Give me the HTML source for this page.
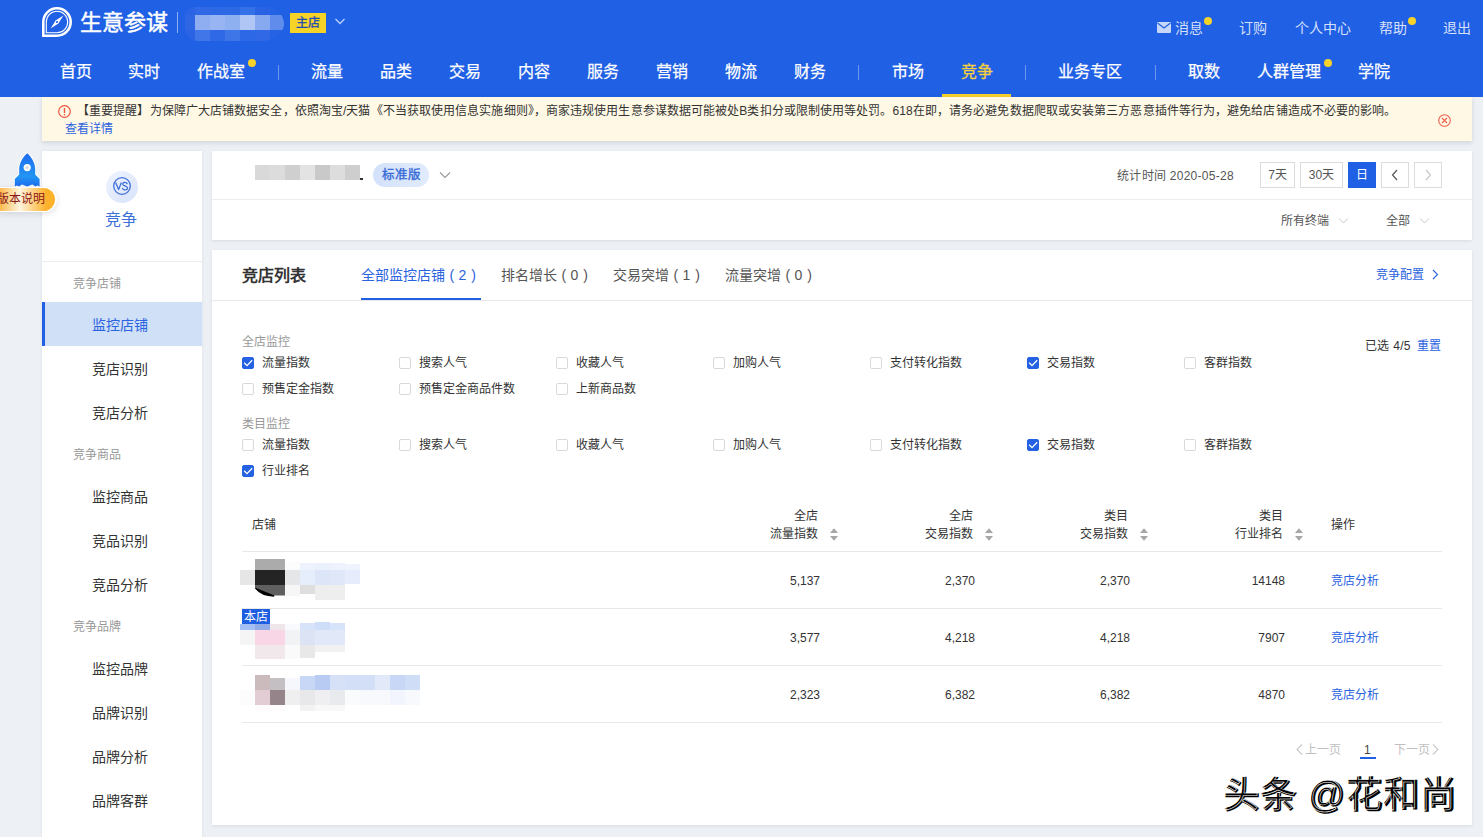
<!DOCTYPE html>
<html lang="zh-CN">
<head>
<meta charset="utf-8">
<style>
*{box-sizing:border-box;margin:0;padding:0}
html,body{width:1483px;height:837px;overflow:hidden;background:#edf0f5;font-family:"Liberation Sans",sans-serif;color:#333}
.a{position:absolute;white-space:nowrap}
#hd{position:absolute;left:0;top:0;width:1483px;height:97px;background:#1f60e4}
.nv{position:absolute;top:62px;font-size:16px;line-height:20px;color:#fff;-webkit-text-stroke:.25px currentColor}
.sep{position:absolute;top:65px;width:1px;height:15px;background:rgba(255,255,255,.35)}
.dot{position:absolute;width:8px;height:8px;border-radius:50%;background:#f7d22b}
.tr{position:absolute;top:19px;font-size:14px;line-height:18px;color:rgba(255,255,255,.82)}
.gh{position:absolute;left:31px;font-size:12px;line-height:16px;color:#999;white-space:nowrap}
.mi{position:absolute;left:50px;font-size:14px;line-height:18px;color:#333;white-space:nowrap}
.btn{position:absolute;top:11px;height:26px;border:1px solid #dcdcdc;font-size:12px;line-height:24px;text-align:center;color:#555;background:#fff}
.btn svg{display:inline-block;vertical-align:top}
i{display:block}
.gl{position:absolute;font-size:12px;line-height:16px;color:#999;white-space:nowrap}
.cl{position:absolute;font-size:12px;line-height:16px;color:#333;white-space:nowrap}
.cb{position:absolute;width:12px;height:12px;border:1px solid #d9d9d9;border-radius:2px;background:#fff}
.cb.on{background:#2562e3;border-color:#2562e3}
.th{position:absolute;font-size:12px;line-height:18px;color:#333;white-space:nowrap}
.td{position:absolute;font-size:12px;line-height:16px;color:#333;white-space:nowrap}
</style>
</head>
<body>
<div id="hd">
  <svg class="a" style="left:42px;top:7px" width="30" height="30" viewBox="0 0 30 30">
    <path d="M1.3 28.7 V15 A13.7 13.7 0 1 1 15 28.7 Z" fill="none" stroke="#fff" stroke-width="2.6" stroke-linejoin="miter"/>
    <path d="M4.3 25.7 V15 A10.7 10.7 0 1 1 15 25.7 Z" fill="none" stroke="#fff" stroke-width="1.1"/>
    <path d="M8.6 21.4 L13.6 13.6 L21.4 8.6 L16.4 16.4 Z" fill="#fff"/>
    <circle cx="15" cy="15" r="1.1" fill="#1f60e4"/>
  </svg>
  <div class="a" style="left:80px;top:9px;font-size:22px;line-height:28px;color:#fff;-webkit-text-stroke:.45px #fff">生意参谋</div>
  <div class="a" style="left:177px;top:12px;width:1px;height:21px;background:rgba(255,255,255,.5)"></div>
  <div class="a" style="left:185px;top:7px;width:99px;height:34px;overflow:hidden;border-radius:10px 18px 22px 14px / 8px 17px 17px 12px">
    <div class="a" style="left:0;top:0;width:99px;height:34px;background:#2a64e5"></div>
    <i class="a" style="left:10px;top:0px;width:15px;height:8px;background:#3068e6"></i><i class="a" style="left:10px;top:8px;width:15px;height:15px;background:#8eaef1"></i><i class="a" style="left:10px;top:23px;width:15px;height:11px;background:#4176e8"></i><i class="a" style="left:25px;top:0px;width:15px;height:8px;background:#2d69e6"></i><i class="a" style="left:25px;top:8px;width:15px;height:15px;background:#98b4f2"></i><i class="a" style="left:25px;top:23px;width:15px;height:11px;background:#2f69e6"></i><i class="a" style="left:40px;top:0px;width:15px;height:8px;background:#2e69e5"></i><i class="a" style="left:40px;top:8px;width:15px;height:15px;background:#8fb0f0"></i><i class="a" style="left:40px;top:23px;width:15px;height:11px;background:#3e76e8"></i><i class="a" style="left:55px;top:0px;width:15px;height:8px;background:#3470e8"></i><i class="a" style="left:55px;top:8px;width:15px;height:15px;background:#b0c7f5"></i><i class="a" style="left:55px;top:23px;width:15px;height:11px;background:#2d68e6"></i><i class="a" style="left:70px;top:0px;width:15px;height:8px;background:#2963e4"></i><i class="a" style="left:70px;top:8px;width:15px;height:15px;background:#86a9ef"></i><i class="a" style="left:70px;top:23px;width:15px;height:11px;background:#3068e6"></i><i class="a" style="left:85px;top:0px;width:15px;height:8px;background:#2563e5"></i><i class="a" style="left:85px;top:8px;width:15px;height:15px;background:#608ceb"></i><i class="a" style="left:85px;top:23px;width:15px;height:11px;background:#2663e4"></i><i class="a" style="left:0px;top:8px;width:10px;height:15px;background:#2f66e4"></i>
  </div>
  <div class="a" style="left:290px;top:13px;width:36px;height:20px;background:#f5d327;color:#1a4ab8;font-size:12px;line-height:20px;text-align:center;-webkit-text-stroke:.3px #1a4ab8">主店</div>
  <svg class="a" style="left:334px;top:17px" width="12" height="9" viewBox="0 0 12 9"><path d="M1.5 2 L6 6.5 L10.5 2" fill="none" stroke="rgba(255,255,255,.7)" stroke-width="1.3"/></svg>

  <svg class="a" style="left:1157px;top:22px" width="14" height="11" viewBox="0 0 14 11"><rect x="0" y="0" width="14" height="11" rx="1" fill="rgba(255,255,255,.75)"/><path d="M0.5 1 L7 6 L13.5 1" fill="none" stroke="#1f60e4" stroke-width="1.2"/></svg>
  <div class="tr" style="left:1175px">消息</div><div class="dot" style="left:1204px;top:17px"></div>
  <div class="tr" style="left:1239px">订购</div>
  <div class="tr" style="left:1295px">个人中心</div>
  <div class="tr" style="left:1379px">帮助</div><div class="dot" style="left:1408px;top:17px"></div>
  <div class="tr" style="left:1443px">退出</div>

  <div class="nv" style="left:60px">首页</div>
  <div class="nv" style="left:128px">实时</div>
  <div class="nv" style="left:197px">作战室</div><div class="dot" style="left:248px;top:59px"></div>
  <div class="sep" style="left:278px"></div>
  <div class="nv" style="left:311px">流量</div>
  <div class="nv" style="left:380px">品类</div>
  <div class="nv" style="left:449px">交易</div>
  <div class="nv" style="left:518px">内容</div>
  <div class="nv" style="left:587px">服务</div>
  <div class="nv" style="left:656px">营销</div>
  <div class="nv" style="left:725px">物流</div>
  <div class="nv" style="left:794px">财务</div>
  <div class="sep" style="left:858px"></div>
  <div class="nv" style="left:892px">市场</div>
  <div class="nv" style="left:961px;color:#f7d13c">竞争</div>
  <div class="a" style="left:942px;top:94px;width:69px;height:3px;background:#f5cf2a"></div>
  <div class="sep" style="left:1025px"></div>
  <div class="nv" style="left:1058px">业务专区</div>
  <div class="sep" style="left:1155px"></div>
  <div class="nv" style="left:1188px">取数</div>
  <div class="nv" style="left:1257px">人群管理</div><div class="dot" style="left:1324px;top:59px"></div>
  <div class="nv" style="left:1358px">学院</div>
</div>
<div class="a" style="left:42px;top:97px;width:1430px;height:44px;background:#fef8e5;box-shadow:0 2px 5px rgba(0,0,0,.12)">
  <svg class="a" style="left:16px;top:8px" width="13" height="13" viewBox="0 0 13 13"><circle cx="6.5" cy="6.5" r="5.8" fill="none" stroke="#f0533f" stroke-width="1.2"/><rect x="5.8" y="3" width="1.4" height="5" fill="#f0533f"/><rect x="5.8" y="9" width="1.4" height="1.4" fill="#f0533f"/></svg>
  <div class="a" style="left:35px;top:6px;font-size:12px;line-height:16px;color:#333;letter-spacing:.09px">【重要提醒】为保障广大店铺数据安全，依照淘宝/天猫《不当获取使用信息实施细则》，商家违规使用生意参谋数据可能被处B类扣分或限制使用等处罚。618在即，请务必避免数据爬取或安装第三方恶意插件等行为，避免给店铺造成不必要的影响。</div>
  <div class="a" style="left:23px;top:24px;font-size:12px;line-height:16px;color:#2a62e0">查看详情</div>
  <svg class="a" style="left:1396px;top:17px" width="13" height="13" viewBox="0 0 13 13"><circle cx="6.5" cy="6.5" r="5.8" fill="none" stroke="#f2604c" stroke-width="1.1"/><path d="M4 4 L9 9 M9 4 L4 9" stroke="#f2604c" stroke-width="1.1"/></svg>
</div>

<div class="a" style="left:42px;top:151px;width:160px;height:700px;background:#fff;box-shadow:0 0 3px rgba(0,0,0,.08)">
  <div class="a" style="left:64px;top:20px;width:32px;height:32px;border-radius:50%;background:linear-gradient(135deg,#eef3fe 0%,#d8e3fa 100%)"></div>
  <svg class="a" style="left:70px;top:25px" width="20" height="20" viewBox="0 0 20 20"><circle cx="10" cy="10" r="8.3" fill="none" stroke="#3e6fd9" stroke-width="1.3"/><path d="M3.6 6.6 L6.6 13.6 L9.4 6.6" fill="none" stroke="#3e6fd9" stroke-width="1.3" stroke-linejoin="round"/><path d="M15.2 7.6 C14.6 6.6 13.6 6.3 12.6 6.4 C11.2 6.6 10.5 7.6 11 8.8 C11.6 10.1 15.4 9.8 15.5 12 C15.6 13.4 14.2 14 12.8 13.9 C11.7 13.8 10.9 13.2 10.5 12.5" fill="none" stroke="#3e6fd9" stroke-width="1.3" stroke-linecap="round"/></svg>
  <div class="a" style="left:63px;top:59px;font-size:16px;line-height:20px;color:#3c6fd8">竞争</div>
  <div class="a" style="left:0;top:110px;width:160px;height:1px;background:#eceef2"></div>
  <div class="gh" style="top:125px">竞争店铺</div>
  <div class="a" style="left:0;top:151px;width:160px;height:44px;background:#cfe0f7;border-left:3px solid #1f60e4"></div>
  <div class="mi" style="top:165px;color:#2a62e0">监控店铺</div>
  <div class="mi" style="top:209px">竞店识别</div>
  <div class="mi" style="top:253px">竞店分析</div>
  <div class="gh" style="top:296px">竞争商品</div>
  <div class="mi" style="top:337px">监控商品</div>
  <div class="mi" style="top:381px">竞品识别</div>
  <div class="mi" style="top:425px">竞品分析</div>
  <div class="gh" style="top:468px">竞争品牌</div>
  <div class="mi" style="top:509px">监控品牌</div>
  <div class="mi" style="top:553px">品牌识别</div>
  <div class="mi" style="top:597px">品牌分析</div>
  <div class="mi" style="top:641px">品牌客群</div>
</div>
<svg class="a" style="left:10px;top:150px" width="36" height="40" viewBox="0 0 36 40">
  <defs><linearGradient id="rg" x1="0" y1="0" x2="0" y2="1"><stop offset="0" stop-color="#1f6cef"/><stop offset="0.7" stop-color="#2294f4"/><stop offset="1" stop-color="#1c6cee"/></linearGradient></defs>
  <path d="M17.2 3.2 C12 8 9 14 9.2 20 L9.2 24.5 L4.8 29 L4.8 36.5 L7 35.5 L9 36.5 L12 34.5 L17.2 36.6 L22.4 34.5 L25.4 36.5 L27.4 35.5 L29.6 36.5 L29.6 29 L25.2 24.5 L25.2 20 C25.4 14 22.4 8 17.2 3.2 Z" fill="url(#rg)" stroke="#fff" stroke-width="2" stroke-linejoin="round" paint-order="stroke"/>
  <circle cx="17.2" cy="17.6" r="3.6" fill="#fff"/><circle cx="17.2" cy="17.6" r="1.8" fill="#ddd"/>
</svg>
<div class="a" style="left:-4px;top:187px;width:61px;height:25px;border-radius:0 12.5px 12.5px 0;background:#fff;box-shadow:0 2px 6px rgba(0,0,0,.12)"></div>
<div class="a" style="left:-2px;top:188px;width:57px;height:23px;border-radius:0 11.5px 11.5px 0;background:linear-gradient(90deg,#fcb43e 0%,#fdd38b 18%,#fff5de 38%,#fdd080 62%,#fdb22c 85%,#fdb22c 100%)"></div>
<div class="a" style="left:-3px;top:190px;font-size:12px;line-height:18px;color:#8c1616">版本说明</div>


<div class="a" style="left:212px;top:151px;width:1260px;height:89px;background:#fff;box-shadow:0 1px 3px rgba(0,0,0,.09)">
  <div class="a" style="left:43px;top:14px;width:105px;height:15px;display:flex">
    <i style="width:15px;background:#d9d9d9"></i><i style="width:15px;background:#dcdcdc"></i><i style="width:15px;background:#cfcfcf"></i><i style="width:15px;background:#e3e3e3"></i><i style="width:15px;background:#c9c9c9"></i><i style="width:15px;background:#dddddd"></i><i style="width:15px;background:#cecece"></i>
  </div>
  <i class="a" style="left:148px;top:27px;width:3px;height:2px;background:#333"></i>
  <div class="a" style="left:161px;top:12px;width:56px;height:24px;border-radius:12px;background:linear-gradient(90deg,#d3e2fb,#e1ebfc);color:#3a6cd6;font-size:12.5px;line-height:24px;text-align:center;-webkit-text-stroke:.4px #3a6cd6">标准版</div>
  <svg class="a" style="left:227px;top:20px" width="12" height="8" viewBox="0 0 12 8"><path d="M1 1.5 L6 6.5 L11 1.5" fill="none" stroke="#999" stroke-width="1.1"/></svg>
  <div class="a" style="left:905px;top:17px;font-size:12px;line-height:16px;color:#555;letter-spacing:.28px">统计时间 2020-05-28</div>
  <div class="btn" style="left:1048px;width:35px">7天</div>
  <div class="btn" style="left:1088px;width:43px">30天</div>
  <div class="btn" style="left:1136px;width:28px;background:#1f60e4;border-color:#1f60e4;color:#fff">日</div>
  <div class="btn" style="left:1169px;width:28px"><svg width="8" height="12" viewBox="0 0 8 12" style="margin-top:6px"><path d="M6 1 L1.5 6 L6 11" fill="none" stroke="#555" stroke-width="1.2"/></svg></div>
  <div class="btn" style="left:1202px;width:28px"><svg width="8" height="12" viewBox="0 0 8 12" style="margin-top:6px"><path d="M2 1 L6.5 6 L2 11" fill="none" stroke="#c8c8c8" stroke-width="1.2"/></svg></div>
  <div class="a" style="left:0;top:48px;width:1260px;height:1px;background:#ededed"></div>
  <div class="a" style="left:1069px;top:62px;font-size:12px;line-height:16px;color:#555">所有终端</div>
  <svg class="a" style="left:1126px;top:66px" width="11" height="8" viewBox="0 0 11 8"><path d="M1 1.5 L5.5 6 L10 1.5" fill="none" stroke="#c8c8c8" stroke-width="1"/></svg>
  <div class="a" style="left:1174px;top:62px;font-size:12px;line-height:16px;color:#555">全部</div>
  <svg class="a" style="left:1207px;top:66px" width="11" height="8" viewBox="0 0 11 8"><path d="M1 1.5 L5.5 6 L10 1.5" fill="none" stroke="#c8c8c8" stroke-width="1"/></svg>
</div>
<div class="a" style="left:212px;top:250px;width:1260px;height:575px;background:#fff;box-shadow:0 1px 3px rgba(0,0,0,.09)">
  <div class="a" style="left:30px;top:16px;font-size:16px;line-height:20px;color:#333;font-weight:700">竞店列表</div>
  <div class="a" style="left:149px;top:16px;font-size:14px;line-height:18px;color:#2a62e0">全部监控店铺<span style="position:absolute;left:88.6px;top:0">(</span><span style="position:absolute;left:97.6px;top:0">2</span><span style="position:absolute;left:110.2px;top:0">)</span></div>
  <div class="a" style="left:149px;top:48px;width:120px;height:2px;background:#1f60e4"></div>
  <div class="a" style="left:289px;top:16px;font-size:14px;line-height:18px;color:#555">排名增长<span style="position:absolute;left:60.6px;top:0">(</span><span style="position:absolute;left:69.6px;top:0">0</span><span style="position:absolute;left:82.2px;top:0">)</span></div>
  <div class="a" style="left:401px;top:16px;font-size:14px;line-height:18px;color:#555">交易突增<span style="position:absolute;left:60.6px;top:0">(</span><span style="position:absolute;left:69.6px;top:0">1</span><span style="position:absolute;left:82.2px;top:0">)</span></div>
  <div class="a" style="left:513px;top:16px;font-size:14px;line-height:18px;color:#555">流量突增<span style="position:absolute;left:60.6px;top:0">(</span><span style="position:absolute;left:69.6px;top:0">0</span><span style="position:absolute;left:82.2px;top:0">)</span></div>
  <div class="a" style="left:1164px;top:17px;font-size:12px;line-height:16px;color:#2a62e0">竞争配置</div>
  <svg class="a" style="left:1220px;top:19px" width="7" height="11" viewBox="0 0 7 11"><path d="M1 1 L5.5 5.5 L1 10" fill="none" stroke="#2a62e0" stroke-width="1.1"/></svg>
  <div class="a" style="left:0;top:50px;width:1260px;height:1px;background:#e8e8e8"></div>
  <div class="gl" style="left:30px;top:84px">全店监控</div>
  <div class="cb on" style="left:30px;top:107px"><svg style="position:absolute;left:-1px;top:-1px" width="12" height="12" viewBox="0 0 12 12"><path d="M2.2 5.8 L5 8.6 L10.2 3.2" fill="none" stroke="#fff" stroke-width="1.3"/></svg></div><div class="cl" style="left:50px;top:105px">流量指数</div>
  <div class="cb" style="left:187px;top:107px"></div><div class="cl" style="left:207px;top:105px">搜索人气</div>
  <div class="cb" style="left:344px;top:107px"></div><div class="cl" style="left:364px;top:105px">收藏人气</div>
  <div class="cb" style="left:501px;top:107px"></div><div class="cl" style="left:521px;top:105px">加购人气</div>
  <div class="cb" style="left:658px;top:107px"></div><div class="cl" style="left:678px;top:105px">支付转化指数</div>
  <div class="cb on" style="left:815px;top:107px"><svg style="position:absolute;left:-1px;top:-1px" width="12" height="12" viewBox="0 0 12 12"><path d="M2.2 5.8 L5 8.6 L10.2 3.2" fill="none" stroke="#fff" stroke-width="1.3"/></svg></div><div class="cl" style="left:835px;top:105px">交易指数</div>
  <div class="cb" style="left:972px;top:107px"></div><div class="cl" style="left:992px;top:105px">客群指数</div>
  <div class="cb" style="left:30px;top:133px"></div><div class="cl" style="left:50px;top:131px">预售定金指数</div>
  <div class="cb" style="left:187px;top:133px"></div><div class="cl" style="left:207px;top:131px">预售定金商品件数</div>
  <div class="cb" style="left:344px;top:133px"></div><div class="cl" style="left:364px;top:131px">上新商品数</div>
  <div class="gl" style="left:30px;top:166px">类目监控</div>
  <div class="cb" style="left:30px;top:189px"></div><div class="cl" style="left:50px;top:187px">流量指数</div>
  <div class="cb" style="left:187px;top:189px"></div><div class="cl" style="left:207px;top:187px">搜索人气</div>
  <div class="cb" style="left:344px;top:189px"></div><div class="cl" style="left:364px;top:187px">收藏人气</div>
  <div class="cb" style="left:501px;top:189px"></div><div class="cl" style="left:521px;top:187px">加购人气</div>
  <div class="cb" style="left:658px;top:189px"></div><div class="cl" style="left:678px;top:187px">支付转化指数</div>
  <div class="cb on" style="left:815px;top:189px"><svg style="position:absolute;left:-1px;top:-1px" width="12" height="12" viewBox="0 0 12 12"><path d="M2.2 5.8 L5 8.6 L10.2 3.2" fill="none" stroke="#fff" stroke-width="1.3"/></svg></div><div class="cl" style="left:835px;top:187px">交易指数</div>
  <div class="cb" style="left:972px;top:189px"></div><div class="cl" style="left:992px;top:187px">客群指数</div>
  <div class="cb on" style="left:30px;top:215px"><svg style="position:absolute;left:-1px;top:-1px" width="12" height="12" viewBox="0 0 12 12"><path d="M2.2 5.8 L5 8.6 L10.2 3.2" fill="none" stroke="#fff" stroke-width="1.3"/></svg></div><div class="cl" style="left:50px;top:213px">行业排名</div>
  <div class="a" style="left:1153px;top:88px;font-size:12px;line-height:16px;color:#333;letter-spacing:.3px">已选 4/5</div>
  <div class="a" style="left:1205px;top:88px;font-size:12px;line-height:16px;color:#2a62e0">重置</div>
  <div class="th" style="left:40px;top:266px">店铺</div>
  <div class="th" style="right:654px;top:257px;text-align:right">全店<br>流量指数</div>
  <svg class="a" style="left:618px;top:278px" width="8" height="13" viewBox="0 0 8 13"><path d="M4 0.3 L8 5 H0 Z M4 12.7 L8 8 H0 Z" fill="#a6a6a6"/></svg>
  <div class="th" style="right:499px;top:257px;text-align:right">全店<br>交易指数</div>
  <svg class="a" style="left:773px;top:278px" width="8" height="13" viewBox="0 0 8 13"><path d="M4 0.3 L8 5 H0 Z M4 12.7 L8 8 H0 Z" fill="#a6a6a6"/></svg>
  <div class="th" style="right:344px;top:257px;text-align:right">类目<br>交易指数</div>
  <svg class="a" style="left:928px;top:278px" width="8" height="13" viewBox="0 0 8 13"><path d="M4 0.3 L8 5 H0 Z M4 12.7 L8 8 H0 Z" fill="#a6a6a6"/></svg>
  <div class="th" style="right:189px;top:257px;text-align:right">类目<br>行业排名</div>
  <svg class="a" style="left:1083px;top:278px" width="8" height="13" viewBox="0 0 8 13"><path d="M4 0.3 L8 5 H0 Z M4 12.7 L8 8 H0 Z" fill="#a6a6a6"/></svg>
  <div class="th" style="left:1119px;top:266px">操作</div>
  <div class="a" style="left:30px;top:301px;width:1200px;height:1px;background:#e8e8e8"></div>
  <div class="td" style="right:652px;top:323px">5,137</div>
  <div class="td" style="right:497px;top:323px">2,370</div>
  <div class="td" style="right:342px;top:323px">2,370</div>
  <div class="td" style="right:187px;top:323px">14148</div>
  <div class="a" style="left:1119px;top:323px;font-size:12px;line-height:16px;color:#2a62e0">竞店分析</div>
  <div class="a" style="left:30px;top:358px;width:1200px;height:1px;background:#e8e8e8"></div>
  <div class="td" style="right:652px;top:380px">3,577</div>
  <div class="td" style="right:497px;top:380px">4,218</div>
  <div class="td" style="right:342px;top:380px">4,218</div>
  <div class="td" style="right:187px;top:380px">7907</div>
  <div class="a" style="left:1119px;top:380px;font-size:12px;line-height:16px;color:#2a62e0">竞店分析</div>
  <div class="a" style="left:30px;top:415px;width:1200px;height:1px;background:#e8e8e8"></div>
  <div class="td" style="right:652px;top:437px">2,323</div>
  <div class="td" style="right:497px;top:437px">6,382</div>
  <div class="td" style="right:342px;top:437px">6,382</div>
  <div class="td" style="right:187px;top:437px">4870</div>
  <div class="a" style="left:1119px;top:437px;font-size:12px;line-height:16px;color:#2a62e0">竞店分析</div>
  <div class="a" style="left:30px;top:472px;width:1200px;height:1px;background:#e8e8e8"></div>
  <i class="a" style="left:43px;top:309px;width:30px;height:11px;background:#ababab;"></i>
  <i class="a" style="left:73px;top:312px;width:15px;height:8px;background:#fcfcfc;"></i>
  <i class="a" style="left:88px;top:313px;width:15px;height:7px;background:#edf2fc;"></i>
  <i class="a" style="left:103px;top:313px;width:15px;height:7px;background:#eaf0fc;"></i>
  <i class="a" style="left:118px;top:313px;width:15px;height:7px;background:#edf2fd;"></i>
  <i class="a" style="left:133px;top:314px;width:15px;height:6px;background:#eef3fd;"></i>
  <i class="a" style="left:28px;top:320px;width:15px;height:15px;background:#e6e6e6;"></i>
  <i class="a" style="left:43px;top:320px;width:30px;height:15px;background:#242424;"></i>
  <i class="a" style="left:73px;top:320px;width:15px;height:15px;background:#e5e6e8;"></i>
  <i class="a" style="left:88px;top:320px;width:15px;height:15px;background:#e6edfb;"></i>
  <i class="a" style="left:103px;top:320px;width:15px;height:15px;background:#dce6f8;"></i>
  <i class="a" style="left:118px;top:320px;width:15px;height:15px;background:#dfe7f8;"></i>
  <i class="a" style="left:133px;top:320px;width:15px;height:14px;background:#e6ecfb;"></i>
  
  <i class="a" style="left:73px;top:335px;width:15px;height:11px;background:#f6f6f6;"></i>
  <i class="a" style="left:88px;top:335px;width:15px;height:9px;background:#dedede;"></i>
  <i class="a" style="left:103px;top:335px;width:15px;height:15px;background:#eeeeee;"></i>
  <i class="a" style="left:118px;top:335px;width:15px;height:15px;background:#eeeeee;"></i>
  <svg class="a" style="left:43px;top:335px" width="30" height="13" viewBox="0 0 30 13"><path d="M0 0 H30 V10.5 H19 Q8 11.5 0 3.6 Z" fill="#5f5f5f"/><path d="M0 3.6 Q6.5 11.6 19 11.8 L19.5 10.6 L1 3.1 Z" fill="#000"/></svg>
  <i class="a" style="left:28px;top:374px;width:15px;height:6px;background:#a3bff5;"></i>
  <i class="a" style="left:43px;top:374px;width:15px;height:6px;background:#93abe7;"></i>
  <i class="a" style="left:58px;top:374px;width:15px;height:6px;background:#efe6ea;"></i>
  <i class="a" style="left:73px;top:374px;width:15px;height:6px;background:#f9fafe;"></i>
  <i class="a" style="left:88px;top:373px;width:15px;height:7px;background:#d6e3f9;"></i>
  <i class="a" style="left:103px;top:372px;width:15px;height:8px;background:#cfdef8;"></i>
  <i class="a" style="left:118px;top:373px;width:15px;height:7px;background:#d6e3f9;"></i>
  <i class="a" style="left:28px;top:380px;width:15px;height:15px;background:#f5f5f5;"></i>
  <i class="a" style="left:43px;top:380px;width:30px;height:15px;background:#f8d6e6;"></i>
  <i class="a" style="left:73px;top:380px;width:15px;height:15px;background:#f2f3f5;"></i>
  <i class="a" style="left:88px;top:380px;width:15px;height:15px;background:#dbe3f4;"></i>
  <i class="a" style="left:103px;top:380px;width:30px;height:15px;background:#e1e8f7;"></i>
  <i class="a" style="left:43px;top:395px;width:30px;height:14px;background:#f1e8eb;"></i>
  <i class="a" style="left:73px;top:395px;width:15px;height:14px;background:#fafafa;"></i>
  <i class="a" style="left:88px;top:395px;width:15px;height:13px;background:#e8e8e8;"></i>
  <i class="a" style="left:103px;top:395px;width:30px;height:7px;background:#f1f1f1;"></i>
  <div class="a" style="left:30px;top:359px;width:28px;height:15px;background:#1f5ee0;color:#fff;font-size:12px;line-height:15px;padding-top:1px;text-align:center">本店</div>
  <i class="a" style="left:43px;top:425px;width:15px;height:15px;background:#cbbbbd;"></i>
  <i class="a" style="left:58px;top:428px;width:15px;height:12px;background:#c3bfc3;"></i>
  <i class="a" style="left:73px;top:428px;width:15px;height:12px;background:#f5f7fd;"></i>
  <i class="a" style="left:88px;top:426px;width:15px;height:14px;background:#c8d7f5;"></i>
  <i class="a" style="left:103px;top:425px;width:15px;height:15px;background:#b8cbf3;"></i>
  <i class="a" style="left:118px;top:425px;width:15px;height:15px;background:#d6e1f8;"></i>
  <i class="a" style="left:133px;top:425px;width:30px;height:15px;background:#d2dff7;"></i>
  <i class="a" style="left:163px;top:425px;width:15px;height:15px;background:#e2e9f9;"></i>
  <i class="a" style="left:178px;top:425px;width:15px;height:15px;background:#c7d7f5;"></i>
  <i class="a" style="left:193px;top:425px;width:15px;height:15px;background:#d0ddf6;"></i>
  <i class="a" style="left:28px;top:440px;width:15px;height:15px;background:#fcfcfc;"></i>
  <i class="a" style="left:43px;top:440px;width:15px;height:15px;background:#e2cdd5;"></i>
  <i class="a" style="left:58px;top:440px;width:15px;height:15px;background:#958489;"></i>
  <i class="a" style="left:73px;top:440px;width:15px;height:15px;background:#efefef;"></i>
  <i class="a" style="left:88px;top:440px;width:15px;height:15px;background:#e8e8ea;"></i>
  <i class="a" style="left:103px;top:440px;width:15px;height:15px;background:#efeff1;"></i>
  <i class="a" style="left:118px;top:440px;width:15px;height:15px;background:#e9eaed;"></i>
  <i class="a" style="left:133px;top:440px;width:15px;height:15px;background:#fafbfd;"></i>
  <i class="a" style="left:148px;top:440px;width:30px;height:15px;background:#f7f9fd;"></i>
  <i class="a" style="left:178px;top:440px;width:15px;height:15px;background:#f2f5fd;"></i>
  <i class="a" style="left:193px;top:440px;width:15px;height:15px;background:#f8f9fd;"></i>
  <i class="a" style="left:43px;top:455px;width:30px;height:6px;background:#fdfbfc;"></i>
  <i class="a" style="left:88px;top:455px;width:15px;height:6px;background:#f2f2f2;"></i>
  <i class="a" style="left:103px;top:455px;width:30px;height:6px;background:#f8f8f8;"></i>
  <svg class="a" style="left:1084px;top:494px" width="7" height="11" viewBox="0 0 7 11"><path d="M6 0.5 L1 5.5 L6 10.5" fill="none" stroke="#c8c8c8" stroke-width="1.1"/></svg>
  <div class="a" style="left:1093px;top:492px;font-size:12px;line-height:16px;color:#c0c0c0">上一页</div>
  <div class="a" style="left:1152px;top:492px;font-size:12px;line-height:16px;color:#444">1</div>
  <div class="a" style="left:1148px;top:507px;width:16px;height:2px;background:#1f60e4"></div>
  <div class="a" style="left:1182px;top:492px;font-size:12px;line-height:16px;color:#c0c0c0">下一页</div>
  <svg class="a" style="left:1220px;top:494px" width="7" height="11" viewBox="0 0 7 11"><path d="M1 0.5 L6 5.5 L1 10.5" fill="none" stroke="#c8c8c8" stroke-width="1.1"/></svg>
</div>

<div class="a" style="left:1224px;top:773px;font-size:36px;line-height:46px;color:#000;letter-spacing:1px;-webkit-text-stroke:1.4px #000">头条 @花和尚</div>
<div class="a" style="left:1222.5px;top:771.5px;font-size:36px;line-height:46px;color:transparent;letter-spacing:1px;-webkit-text-stroke:0.55px #fff">头条 @花和尚</div>
</body>
</html>
